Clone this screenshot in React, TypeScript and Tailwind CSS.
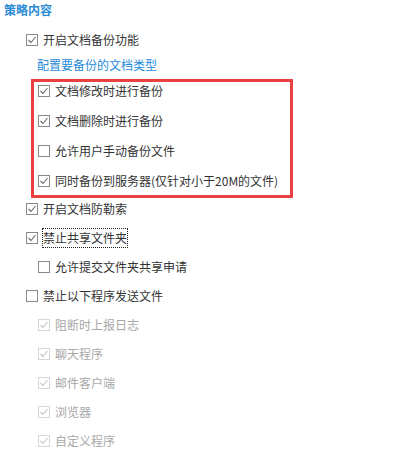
import React from "react";

type CbProps = { checked?: boolean; disabled?: boolean };

function Box({ checked, disabled }: CbProps) {
  return (
    <span
      className={
        "flex h-[12px] w-[12px] shrink-0 items-center justify-center border bg-white " +
        (disabled ? "border-[#d6d6d6]" : "border-[#8a8a8a]")
      }
    >
      {checked && (
        <svg width="10" height="10" viewBox="0 0 10 10" fill="none">
          <polyline
            points="1.5,5 4,7.5 8.5,2"
            stroke={disabled ? "#c4c4c4" : "#6a6a6a"}
            strokeWidth="1.1"
            fill="none"
          />
        </svg>
      )}
    </span>
  );
}

function Item({
  label,
  checked,
  disabled,
  focus,
  indent,
  height = "h-[20px]",
}: {
  label: string;
  checked?: boolean;
  disabled?: boolean;
  focus?: boolean;
  indent?: string;
  height?: string;
}) {
  return (
    <div className={"flex items-center gap-[4px] " + height + " " + (indent ?? "")}>
      <Box checked={checked} disabled={disabled} />
      <span
        className={
          "leading-[18px] " +
          (disabled ? "text-[#a8a8a8] " : "text-[#333333] ") +
          (focus ? "border border-dotted border-[#222] px-[0px]" : "border border-transparent")
        }
      >
        {label}
      </span>
    </div>
  );
}

export default function App() {
  return (
    <div
      className="h-[452px] w-[394px] overflow-hidden bg-white text-[12px]"
      style={{ fontFamily: '"Noto Sans CJK SC", "Noto Sans", sans-serif' }}
    >
      <div className="ml-[4px] h-[20px] font-bold leading-[20px] text-[#2a8cd4]">策略内容</div>
      <Item label="开启文档备份功能" checked indent="ml-[26px] mt-[10px]" />
      <div className="ml-[37px] mt-[5px] h-[20px] leading-[20px] text-[#1f8ad8]">配置要备份的文档类型</div>
      <div className="ml-[31px] mt-[4px] flex w-[262px] flex-col gap-[12px] border-[3px] border-[#e8413f] pb-[5px] pl-[4px]">
        <Item label="文档修改时进行备份" checked height="h-[18px]" />
        <Item label="文档删除时进行备份" checked height="h-[18px]" />
        <Item label="允许用户手动备份文件" height="h-[18px]" />
        <Item label="同时备份到服务器(仅针对小于20M的文件)" checked height="h-[18px]" />
      </div>
      <div className="mt-[1px] flex flex-col gap-[9px]">
        <Item label="开启文档防勒索" checked indent="ml-[26px]" />
        <Item label="禁止共享文件夹" checked focus indent="ml-[26px]" />
        <Item label="允许提交文件夹共享申请" indent="ml-[38px]" />
        <Item label="禁止以下程序发送文件" indent="ml-[26px]" />
        <Item label="阻断时上报日志" checked disabled indent="ml-[38px]" />
        <Item label="聊天程序" checked disabled indent="ml-[38px]" />
        <Item label="邮件客户端" checked disabled indent="ml-[38px]" />
        <Item label="浏览器" checked disabled indent="ml-[38px]" />
        <Item label="自定义程序" checked disabled indent="ml-[38px]" />
      </div>
    </div>
  );
}
